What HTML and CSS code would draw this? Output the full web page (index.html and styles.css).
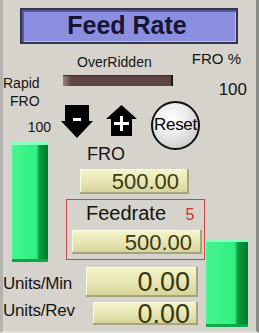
FILE: index.html
```html
<!DOCTYPE html>
<html lang="en">
<head>
    <meta charset="UTF-8">
    <title>Feed Rate</title>
    <link rel="stylesheet" href="styles.css">
</head>
<body>
<div class="panel">
    <div class="title">Feed Rate</div>
    <div class="main">
        <div class="col_left">
            <div class="upper">
                <div class="side">
                    <div class="rapid">Rapid</div>
                    <div class="rapid_fro">FRO</div>
                    <div class="rapid_val">100</div>
                    <div class="gbar gbar_left"></div>
                </div>
                <div class="center">
                    <div class="over">OverRidden</div>
                    <div class="led"></div>
                    <div class="btns">
                        <svg class="btn_down" width="32" height="33" viewBox="0 0 32 33">
                            <path d="M4 0 H28 V16 H32 L16 33 L0 16 H4 Z" fill="#000"/>
                            <rect x="12" y="13" width="8" height="3" fill="#fff"/>
                        </svg>
                        <svg class="btn_up" width="31" height="31" viewBox="0 0 31 31">
                            <path d="M15.5 0 L31 14 H26 V31 H5 V14 H0 Z" fill="#000"/>
                            <rect x="8" y="17" width="15" height="3" fill="#fff"/>
                            <rect x="14" y="11" width="3" height="15" fill="#fff"/>
                        </svg>
                        <div class="reset">Reset</div>
                    </div>
                    <div class="fro_lbl">FRO</div>
                    <div class="field f_fro">500.00</div>
                    <div class="feedbox">
                        <div class="feed_lbl">Feedrate <span class="feed_num">5</span></div>
                        <div class="field f_feed">500.00</div>
                    </div>
                </div>
            </div>
            <div class="urow urow_min">
                <div class="ulbl">Units/Min</div>
                <div class="field big">0.00</div>
            </div>
            <div class="urow urow_rev">
                <div class="ulbl">Units/Rev</div>
                <div class="field big">0.00</div>
            </div>
        </div>
        <div class="col_right">
            <div class="fro_pct">FRO %</div>
            <div class="fro_val">100</div>
            <div class="gbar gbar_right"></div>
        </div>
    </div>
</div>
</body>
</html>
```
FILE: styles.css
```css
* {
    margin: 0;
    padding: 0;
    box-sizing: border-box;
}

body {
    background: #d6d3cc;
    font-family: "Liberation Sans", Arial, sans-serif;
    color: #141414;
}

.panel {
    width: 259px;
    height: 333px;
    background: #d6d3cc;
    border-left: 3px solid #b4b2ac;
    border-right: 3px solid #8c8b88;
    border-bottom: 2px solid #e4e2dc;
    padding-top: 8px;
    overflow: hidden;
}

.title {
    margin-left: 17px;
    width: 218px;
    height: 36px;
    background: #8c8edf;
    border: 2px solid #34344a;
    box-shadow: inset 2px 2px 0 #5a5aa0, inset -1px -1px 0 #b8baf0;
    color: #161634;
    font-size: 25px;
    font-weight: bold;
    line-height: 31px;
    text-align: center;
    padding-right: 4px;
}

.main {
    display: flex;
}

.col_left {
    width: 202px;
    flex: none;
}

.upper {
    display: flex;
}

/* left column: rapid fro */
.side {
    width: 52px;
    flex: none;
    padding-top: 30px;
    font-size: 14px;
    line-height: 18px;
}
.rapid_fro {
    padding-left: 7px;
}
.rapid_val {
    margin-top: 8px;
    text-align: right;
    padding-right: 4px;
}

.gbar {
    background: linear-gradient(to right, #46f590 0%, #30ef80 68%, #0a9a3e 76%, #007a2c 100%);
    box-shadow: inset 0 3px 0 #8affc0, inset 0 -3px 0 #0ea848;
}
.gbar_left {
    margin-top: 6px;
    margin-left: 9px;
    width: 36px;
    height: 120px;
}

/* center column */
.center {
    width: 150px;
    flex: none;
    padding-top: 9px;
}
.over {
    font-size: 14px;
    line-height: 18px;
    padding-left: 22px;
}
.led {
    margin-top: 4px;
    margin-left: 8px;
    width: 110px;
    height: 11px;
    background: linear-gradient(to right, #9a8686 0, #5e4444 8px, #5e4444 100%);
    border-right: 2px solid #1e1414;
    border-top: 1px solid #3e2a2a;
}

.btns {
    display: flex;
    align-items: flex-start;
    height: 43px;
    margin-top: 15px;
}
.btn_down {
    margin-left: 6px;
    margin-top: 4px;
}
.btn_up {
    margin-left: 13px;
    margin-top: 4px;
}
.reset {
    margin-left: 14px;
    width: 49px;
    height: 49px;
    flex: none;
    border-radius: 50%;
    border: 2px solid #111;
    background: radial-gradient(circle at 40% 35%, #ffffff 0%, #ececec 40%, #bcbcbc 100%);
    font-size: 17px;
    line-height: 44px;
    text-align: center;
    letter-spacing: -0.3px;
    color: #000;
}

.fro_lbl {
    font-size: 18px;
    line-height: 20px;
    padding-left: 32px;
}

.field {
    background: linear-gradient(to bottom, #f6f4cc 0%, #e8e6b4 50%, #d4d09a 100%);
    box-shadow: inset -2px -2px 0 #a8a47a, inset 1px 1px 0 #fbfae4;
    color: #3a3a10;
    text-align: right;
    font-size: 22px;
    padding-right: 10px;
}
.f_fro {
    margin-top: 5px;
    margin-left: 25px;
    width: 109px;
    height: 25px;
    line-height: 26px;
}

.feedbox {
    margin-top: 5px;
    margin-left: 11px;
    width: 139px;
    height: 61px;
    border: 1px solid #cc4848;
    padding-top: 2px;
}
.feed_lbl {
    font-size: 20px;
    line-height: 22px;
    padding-left: 19px;
}
.feed_num {
    color: #d03030;
    font-size: 16px;
    margin-left: 14px;
}
.f_feed {
    margin-top: 4px;
    margin-left: 5px;
    width: 130px;
    height: 24px;
    line-height: 25px;
}

/* units rows */
.urow {
    display: flex;
    align-items: flex-start;
}
.ulbl {
    flex: none;
    font-size: 17px;
    line-height: 20px;
    letter-spacing: -0.2px;
}
.field.big {
    font-size: 27px;
    padding-right: 8px;
}
.urow_min {
    margin-top: 5px;
}
.urow_min .ulbl {
    width: 83px;
    margin-top: 7px;
}
.urow_min .field {
    width: 112px;
    height: 30px;
    line-height: 31px;
}
.urow_rev {
    margin-top: 5px;
}
.urow_rev .ulbl {
    width: 90px;
    margin-top: -1px;
}
.urow_rev .field {
    width: 105px;
    height: 23px;
    line-height: 24px;
}

/* right column */
.col_right {
    flex: 1;
    min-width: 0;
    display: flex;
    flex-direction: column;
    align-items: flex-end;
    padding-top: 6px;
    padding-right: 8px;
}
.fro_pct {
    font-size: 15px;
    line-height: 18px;
    white-space: nowrap;
    margin-right: 7px;
}
.fro_val {
    margin-top: 12px;
    font-size: 17px;
    line-height: 20px;
    margin-right: 1px;
}
.gbar_right {
    flex: none;
    margin-top: 139px;
    width: 42px;
    height: 88px;
}
```
